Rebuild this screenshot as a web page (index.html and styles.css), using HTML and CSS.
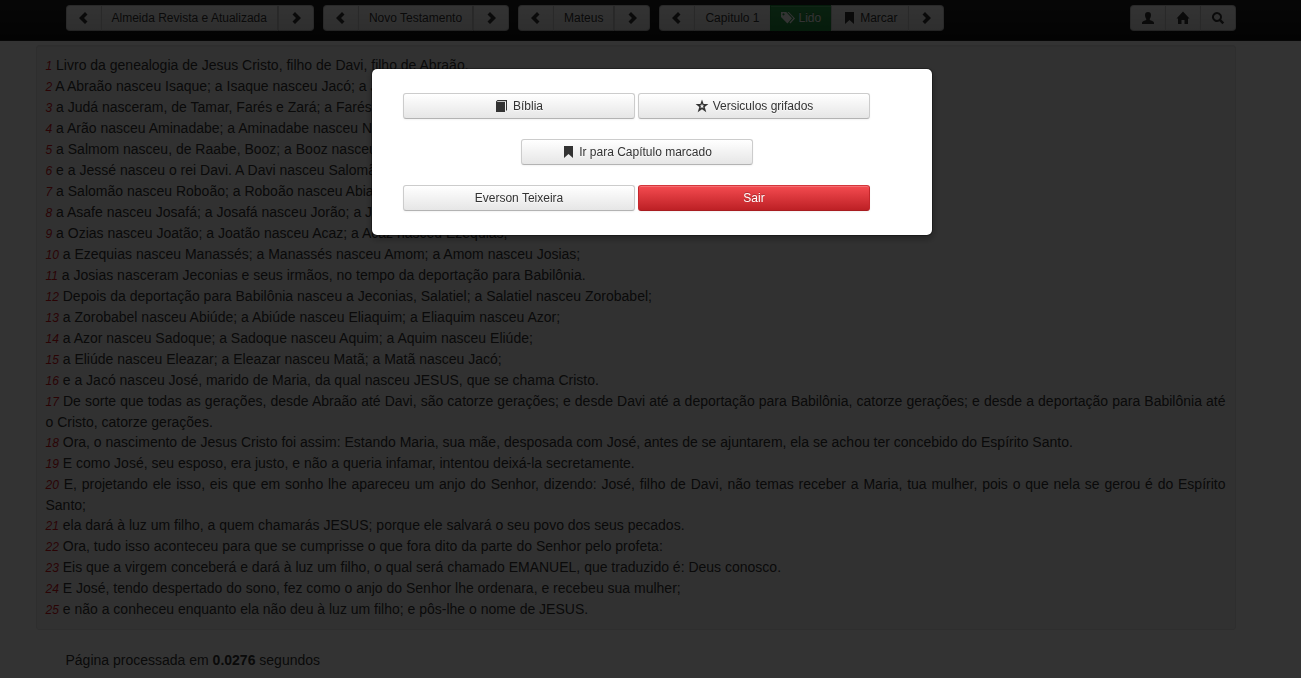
FILE: index.html
```html
<!DOCTYPE html>
<html lang="pt-BR">
<head>
<meta charset="utf-8">
<title>Bíblia - Mateus 1</title>
<link rel="stylesheet" href="styles.css">
</head>
<body>
<svg class="sprite" aria-hidden="true">
  <symbol id="left" viewBox="0 0 14 14"><path d="M8 1 L10.500 3.500 L7 7 L10.500 10.500 L8 13 L2 7 Z"/></symbol>
  <symbol id="right" viewBox="0 0 14 14"><path d="M6 1 L3.500 3.500 L7 7 L3.500 10.500 L6 13 L12 7 Z"/></symbol>
  <symbol id="tags" viewBox="0 0 14 14"><path fill-rule="evenodd" d="M0 1h5.200l5.800 6.200-4.600 5.300L0 6zM2.500 2.200a1.100 1.100 0 1 0 .01 0z"/><path d="M6.500 1h1.300L14 7.400l-4.600 5.100-.9-.9 3.900-4.300z"/></symbol>
  <symbol id="bookmark" viewBox="0 0 14 14"><path d="M3 1h9v12L7.500 9 3 13z"/></symbol>
  <symbol id="user" viewBox="0 0 14 14"><path d="M7 1c2 0 3 1.200 3 3 0 2-.7 3-1.200 3.800v1.100c1.400.8 4.200 1.100 4.200 3V13H1v-1.100c0-1.900 2.800-2.200 4.200-3V7.800C4.700 7 4 6 4 4c0-1.800 1-3 3-3z"/></symbol>
  <symbol id="home" viewBox="0 0 14 14"><path d="M7 .5 13.500 7.500H12V13H8.500V9h-3v4H2V7.500H.5z"/></symbol>
  <symbol id="search" viewBox="0 0 14 14"><path fill-rule="evenodd" d="M6 1a5 5 0 0 1 4.200 7.600l3 2.800-1.800 1.800-2.900-2.900A5 5 0 1 1 6 1zm0 2a3 3 0 1 0 .01 0z"/></symbol>
  <symbol id="book" viewBox="0 0 14 14"><path d="M1 2.500 2.500 1H12v10.500h-1V2.200H2.500L2 3h8v10H1z"/></symbol>
  <symbol id="star" viewBox="0 0 14 14"><path fill-rule="evenodd" d="M7 .5 8.600 5H13.400L9.700 8l1.600 5.200L7 10.200l-4.300 3L4.300 8 .6 5h4.800zM7 4.500 6.300 6.500H4.800L6 7.500 5.500 9.300 7 8.300l1.500 1L8 7.500l1.200-1H7.700z"/></symbol>
</svg>

<header class="navbar">
  <nav class="container toolbar">
    <div class="group pager">
      <button class="btn" aria-label="Versão anterior"><svg class="icon"><use href="#left"/></svg></button>
      <button class="btn">Almeida Revista e Atualizada</button>
      <button class="btn" aria-label="Próxima versão"><svg class="icon"><use href="#right"/></svg></button>
    </div>
    <div class="group pager">
      <button class="btn" aria-label="Testamento anterior"><svg class="icon"><use href="#left"/></svg></button>
      <button class="btn">Novo Testamento</button>
      <button class="btn" aria-label="Próximo testamento"><svg class="icon"><use href="#right"/></svg></button>
    </div>
    <div class="group pager">
      <button class="btn" aria-label="Livro anterior"><svg class="icon"><use href="#left"/></svg></button>
      <button class="btn">Mateus</button>
      <button class="btn" aria-label="Próximo livro"><svg class="icon"><use href="#right"/></svg></button>
    </div>
    <div class="group">
      <button class="btn" aria-label="Capítulo anterior"><svg class="icon"><use href="#left"/></svg></button>
      <button class="btn">Capitulo 1</button>
      <button class="btn success"><svg class="icon"><use href="#tags"/></svg>Lido</button>
      <button class="btn"><svg class="icon"><use href="#bookmark"/></svg>Marcar</button>
      <button class="btn" aria-label="Próximo capítulo"><svg class="icon"><use href="#right"/></svg></button>
    </div>
    <div class="group end">
      <button class="btn" aria-label="Usuário"><svg class="icon"><use href="#user"/></svg></button>
      <button class="btn" aria-label="Início"><svg class="icon"><use href="#home"/></svg></button>
      <button class="btn" aria-label="Buscar"><svg class="icon"><use href="#search"/></svg></button>
    </div>
  </nav>
</header>

<main class="container">
  <article class="well">
    <p><em>1</em> Livro da genealogia de Jesus Cristo, filho de Davi, filho de Abraão.</p>
    <p><em>2</em> A Abraão nasceu Isaque; a Isaque nasceu Jacó; a Jacó nasceram Judá e seus irmãos;</p>
    <p><em>3</em> a Judá nasceram, de Tamar, Farés e Zará; a Farés nasceu Esrom; a Esrom nasceu Arão;</p>
    <p><em>4</em> a Arão nasceu Aminadabe; a Aminadabe nasceu Nasom; a Nasom nasceu Salmom;</p>
    <p><em>5</em> a Salmom nasceu, de Raabe, Booz; a Booz nasceu, de Rute, Obede; a Obede nasceu Jessé;</p>
    <p><em>6</em> e a Jessé nasceu o rei Davi. A Davi nasceu Salomão da que fora mulher de Urias;</p>
    <p><em>7</em> a Salomão nasceu Roboão; a Roboão nasceu Abias; a Abias nasceu Asafe;</p>
    <p><em>8</em> a Asafe nasceu Josafá; a Josafá nasceu Jorão; a Jorão nasceu Ozias;</p>
    <p><em>9</em> a Ozias nasceu Joatão; a Joatão nasceu Acaz; a Acaz nasceu Ezequias;</p>
    <p><em>10</em> a Ezequias nasceu Manassés; a Manassés nasceu Amom; a Amom nasceu Josias;</p>
    <p><em>11</em> a Josias nasceram Jeconias e seus irmãos, no tempo da deportação para Babilônia.</p>
    <p><em>12</em> Depois da deportação para Babilônia nasceu a Jeconias, Salatiel; a Salatiel nasceu Zorobabel;</p>
    <p><em>13</em> a Zorobabel nasceu Abiúde; a Abiúde nasceu Eliaquim; a Eliaquim nasceu Azor;</p>
    <p><em>14</em> a Azor nasceu Sadoque; a Sadoque nasceu Aquim; a Aquim nasceu Eliúde;</p>
    <p><em>15</em> a Eliúde nasceu Eleazar; a Eleazar nasceu Matã; a Matã nasceu Jacó;</p>
    <p><em>16</em> e a Jacó nasceu José, marido de Maria, da qual nasceu JESUS, que se chama Cristo.</p>
    <p><em>17</em> De sorte que todas as gerações, desde Abraão até Davi, são catorze gerações; e desde Davi até a deportação para Babilônia, catorze gerações; e desde a deportação para Babilônia até o Cristo, catorze gerações.</p>
    <p><em>18</em> Ora, o nascimento de Jesus Cristo foi assim: Estando Maria, sua mãe, desposada com José, antes de se ajuntarem, ela se achou ter concebido do Espírito Santo.</p>
    <p><em>19</em> E como José, seu esposo, era justo, e não a queria infamar, intentou deixá-la secretamente.</p>
    <p><em>20</em> E, projetando ele isso, eis que em sonho lhe apareceu um anjo do Senhor, dizendo: José, filho de Davi, não temas receber a Maria, tua mulher, pois o que nela se gerou é do Espírito Santo;</p>
    <p><em>21</em> ela dará à luz um filho, a quem chamarás JESUS; porque ele salvará o seu povo dos seus pecados.</p>
    <p><em>22</em> Ora, tudo isso aconteceu para que se cumprisse o que fora dito da parte do Senhor pelo profeta:</p>
    <p><em>23</em> Eis que a virgem conceberá e dará à luz um filho, o qual será chamado EMANUEL, que traduzido é: Deus conosco.</p>
    <p><em>24</em> E José, tendo despertado do sono, fez como o anjo do Senhor lhe ordenara, e recebeu sua mulher;</p>
    <p><em>25</em> e não a conheceu enquanto ela não deu à luz um filho; e pôs-lhe o nome de JESUS.</p>
  </article>
  <footer>Página processada em <strong>0.0276</strong> segundos</footer>
</main>

<div class="backdrop"></div>
<div class="modal" role="dialog" aria-label="Menu">
  <div class="row">
    <button class="btn"><svg class="icon"><use href="#book"/></svg>Bíblia</button>
    <button class="btn"><svg class="icon"><use href="#star"/></svg>Versiculos grifados</button>
  </div>
  <div class="row">
    <button class="btn"><svg class="icon"><use href="#bookmark"/></svg>Ir para Capítulo marcado</button>
  </div>
  <div class="row">
    <button class="btn">Everson Teixeira</button>
    <button class="btn danger">Sair</button>
  </div>
</div>
</body>
</html>
```

FILE: styles.css
```css
* { box-sizing: border-box; }

body {
  margin: 0;
  background: #fff;
  color: #333;
  font: 14px/20px "Liberation Sans", Arial, sans-serif;
}

.sprite { display: none; }

.container {
  max-width: 1170px;
  margin: 0 auto;
}

.navbar {
  height: 41px;
  padding-top: 5px;
  border-bottom: 1px solid #252525;
  background: linear-gradient(#222, #111);
}

.toolbar {
  display: flex;
  gap: 9px;
}

.group { display: flex; }
.group.end { margin-left: auto; }

.btn {
  display: flex;
  align-items: center;
  justify-content: center;
  gap: 4px;
  height: 26px;
  padding: 0 10px;
  border: 1px solid #ccc;
  border-bottom-color: #b3b3b3;
  border-radius: 3px;
  background: linear-gradient(#fff, #e6e6e6);
  box-shadow: inset 0 1px 0 rgba(255, 255, 255, .2), 0 1px 2px rgba(0, 0, 0, .05);
  color: #333;
  font: 12px/20px "Liberation Sans", Arial, sans-serif;
  white-space: nowrap;
  text-shadow: 0 1px 1px rgba(255, 255, 255, .75);
}

.group .btn { border-radius: 0; }
.group .btn + .btn { margin-left: -1px; }
.group .btn:first-child { border-radius: 4px 0 0 4px; }
.group .btn:last-child { border-radius: 0 4px 4px 0; }
.pager .btn:last-child { margin-left: 0; }

.success,
.danger {
  color: #fff;
  text-shadow: 0 -1px 0 rgba(0, 0, 0, .25);
}

.success {
  border-color: #1f8a3c;
  background: linear-gradient(#2fa34e, #1f8a3c);
}

.danger {
  border-color: #d3363b #c4262b #a81c20;
  background: linear-gradient(#f44b50, #bd2025);
}

.icon {
  width: 14px;
  height: 14px;
  fill: currentColor;
}

.well {
  margin: 4px 0 20px -30px;
  padding: 9px;
  border: 1px solid #e3e3e3;
  border-radius: 3px;
  background: #f5f5f5;
  box-shadow: inset 0 1px 1px rgba(0, 0, 0, .05);
  text-align: justify;
}

.well p { margin: 0; }

.well em {
  color: #d4141c;
  font-size: 12px;
}

.backdrop {
  position: fixed;
  inset: 0;
  background: rgba(0, 0, 0, .8);
}

.modal {
  position: fixed;
  top: 10%;
  left: 50%;
  display: grid;
  gap: 20px;
  width: 562px;
  margin-left: -280px;
  padding: 24px 61px 24px 31px;
  border: 1px solid rgba(0, 0, 0, .3);
  border-radius: 6px;
  background: #fff padding-box;
  box-shadow: 0 3px 7px rgba(0, 0, 0, .3);
}

.row {
  display: flex;
  justify-content: center;
  gap: 3px;
}

.row .btn { width: 232px; }
```
